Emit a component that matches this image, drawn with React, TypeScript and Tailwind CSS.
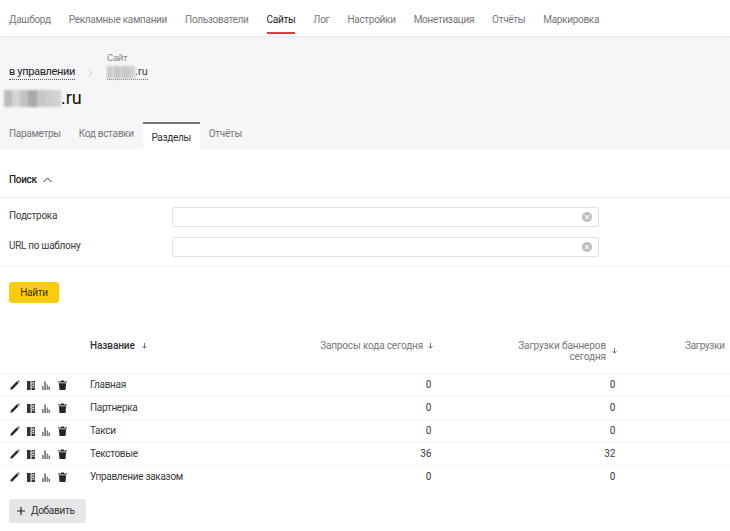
import React from "react";

const nav = ["Дашборд", "Рекламные кампании", "Пользователи", "Сайты", "Лог", "Настройки", "Монетизация", "Отчёты", "Маркировка"];
const rows: [string, string, string][] = [
  ["Главная", "0", "0"],
  ["Партнерка", "0", "0"],
  ["Такси", "0", "0"],
  ["Текстовые", "36", "32"],
  ["Управление заказом", "0", "0"],
];

function Pencil() {
  return (
    <svg width="10" height="10" viewBox="0 0 10 10" className="text-[#2b2b2b]">
      <path d="M0.3 9.7 L0.8 7.4 L6.9 1.3 L8.7 3.1 L2.6 9.2 Z M7.5 0.7 L8.2 0.2 L9.8 1.8 L9.3 2.5 Z" fill="currentColor" />
    </svg>
  );
}
function Layout() {
  return (
    <svg width="8" height="9" viewBox="0 0 8 9" className="text-[#333]">
      <path d="M0 0H3.6V9H0Z M4.6 0H8V2.6H4.6Z M4.6 3.3H8V5.7H4.6Z M4.6 6.4H8V9H4.6Z" fill="currentColor" />
      <path d="M5.4 .8H7.2V1.8H5.4Z M5.4 4H7.2V5H5.4Z" fill="#fff" />
    </svg>
  );
}
function Bars() {
  return (
    <svg width="8" height="9" viewBox="0 0 8 9" className="text-[#777]">
      <path d="M0 5H1.5V9H0Z M2.2 0.5H3.9V9H2.2Z M4.6 3.5H5.9V9H4.6Z M6.5 5.5H8V9H6.5Z" fill="currentColor" />
    </svg>
  );
}
function Trash() {
  return (
    <svg width="9" height="10" viewBox="0 0 9 10" className="text-[#262626]">
      <path d="M0 1.4H2.7L3.2 .4H5.8L6.3 1.4H9V2.6H0Z M.9 3.2H8.1L7.5 9.9H1.5Z" fill="currentColor" />
    </svg>
  );
}
function Clear() {
  return (
    <svg width="10" height="10" viewBox="0 0 10 10" className="absolute right-[6px] top-[4px]">
      <circle cx="5" cy="5" r="5" fill="#bdbdbd" />
      <path d="M3 3L7 7M7 3L3 7" stroke="#f0f0f0" strokeWidth="1.1" />
    </svg>
  );
}
function SortArrow() {
  return (
    <svg width="5" height="6" viewBox="0 0 5 6" className="text-[#777] shrink-0">
      <path d="M2.5 0V5M.5 3L2.5 5.3L4.5 3" fill="none" stroke="currentColor" strokeWidth="1" />
    </svg>
  );
}
function Redacted({ w, h, dark }: { w: number; h: number; dark?: boolean }) {
  return (
    <span className="inline-flex overflow-hidden blur-[1px]" style={{ width: w, height: h }}>
      {Array.from({ length: 7 }).map((_, i) => (
        <span
          key={i}
          className="flex-1"
          style={{ background: [dark ? "#bcbcbc" : "#c9c9c9", "#d4d4d4", "#c2c2c2", dark ? "#a9a9a9" : "#d0d0d0", "#c6c6c6", "#cdcdcd", "#d2d2d2"][i] }}
        />
      ))}
    </span>
  );
}
function SearchField({ label }: { label: string }) {
  return (
    <div className="flex items-center h-[30px]">
      <div className="w-[163px] text-[#3a3a3a] pb-[3px]">{label}</div>
      <div className="relative w-[427px] h-[20px] bg-white border border-[#e2e0e3] rounded-[2px]">
        <Clear />
      </div>
    </div>
  );
}

export default function App() {
  return (
    <div className="w-[730px] h-[531px] overflow-hidden bg-white text-[10px] tracking-[-0.3px] leading-[14px] text-[#3a3a3a]" style={{ fontFamily: 'Roboto, "Noto Sans", sans-serif' }}>
      <header className="relative z-10 flex h-[36px] gap-[18px] pl-[9px] bg-white shadow-[0_1px_2px_rgba(0,0,0,0.08)]">
        {nav.map((n) => (
          <div key={n} className={"relative pt-[13px] " + (n === "Сайты" ? "text-[#222]" : "text-[#777]")}>
            {n}
            {n === "Сайты" && <div className="absolute left-0 right-0 bottom-[2px] h-[2px] bg-[#d8413f]" />}
          </div>
        ))}
      </header>
      <section className="h-[113px] bg-[#f6f5f7] relative">
        <div className="flex items-end pl-[9px] pt-[17px] h-[44px]">
          <span className="text-[11px] tracking-[-0.35px] leading-[15px] text-[#222] border-b border-dotted border-[#555]">в управлении</span>
          <svg width="5" height="8" viewBox="0 0 5 8" className="ml-[13px] mb-[3px]">
            <path d="M.5 .5L4 4L.5 7.5" fill="none" stroke="#c8c8c8" strokeWidth="1" />
          </svg>
          <div className="ml-[14px] flex flex-col">
            <span className="text-[9.5px] leading-[12px] text-[#888] mb-[1px]">Сайт</span>
            <span className="flex items-center text-[11px] tracking-normal leading-[14px] text-[#444] border-b border-dotted border-[#777] w-[41px]">
              <Redacted w={28} h={13} />.ru
            </span>
          </div>
        </div>
        <div className="flex items-center pl-[4px] mt-[5px] h-[26px] text-[18px] tracking-normal text-[#111]">
          <Redacted w={57} h={17} dark />.ru
        </div>
        <div className="absolute bottom-0 left-0 flex items-end h-[27px] pl-[9px]">
          <div className="text-[#777] pb-[8px] mr-[18px]">Параметры</div>
          <div className="text-[#777] pb-[8px] mr-[9px]">Код вставки</div>
          <div className="h-[27px] w-[57px] bg-white border-t-2 border-[#777] text-[#333] text-center pt-[7px]">Разделы</div>
          <div className="text-[#777] pb-[8px] ml-[9px]">Отчёты</div>
        </div>
      </section>
      <section className="h-[49px] flex items-center pl-[9px] pt-[14px] border-b border-[#f0eff1] font-medium text-[#222]">
        Поиск
        <svg width="9" height="6" viewBox="0 0 9 6" className="ml-[6px]">
          <path d="M.5 5L4.5 1L8.5 5" fill="none" stroke="#333" strokeWidth="1" />
        </svg>
      </section>
      <section className="pl-[9px] pt-[4px] pb-[4px] border-b border-[#f7f6f8]">
        <SearchField label="Подстрока" />
        <SearchField label="URL по шаблону" />
      </section>
      <div className="pl-[9px] pt-[15px]">
        <button className="w-[50px] h-[21px] rounded-[3px] bg-[#fdcb0a] text-[#3a3000] text-[10px]">Найти</button>
      </div>
      <div className="w-[900px] mt-[21px]">
        <div className="flex h-[49px]">
          <div className="w-[90px]" />
          <div className="w-[170px] flex items-center gap-[7px] pb-[5px] font-medium tracking-[-0.1px] text-[#333]">
            Название <SortArrow />
          </div>
          <div className="w-[174px] flex items-center justify-end gap-[5px] pb-[5px] tracking-[-0.15px] text-[#777] pr-[1px]">
            Запросы кода сегодня <SortArrow />
          </div>
          <div className="w-[183px] flex items-center justify-end gap-[6px] pt-[5px] tracking-[-0.1px] text-[#777] text-right">
            <span className="leading-[11px]">Загрузки баннеров<br />сегодня</span> <SortArrow />
          </div>
          <div className="pl-[68px] flex items-center pb-[5px] text-[#777]">Загрузки</div>
        </div>
        {rows.map(([n, a, b]) => (
          <div key={n} className="flex items-center h-[23px] border-t border-[#f6f5f7]">
            <div className="w-[90px] flex items-center pl-[10px]">
              <span className="w-[17px] flex"><Pencil /></span>
              <span className="w-[15px] flex"><Layout /></span>
              <span className="w-[16px] flex"><Bars /></span>
              <Trash />
            </div>
            <div className="w-[170px]">{n}</div>
            <div className="w-[171px] text-right">{a}</div>
            <div className="w-[184px] text-right">{b}</div>
          </div>
        ))}
      </div>
      <div className="pl-[9px] mt-[11px]">
        <button className="flex items-center w-[77px] h-[24px] rounded-[3px] bg-[#e6e5e7] text-[#333]">
          <svg width="8" height="8" viewBox="0 0 8 8" className="ml-[8px] mr-[6px]">
            <path d="M4 0V8M0 4H8" stroke="#222" strokeWidth="1.2" />
          </svg>
          Добавить
        </button>
      </div>
    </div>
  );
}
